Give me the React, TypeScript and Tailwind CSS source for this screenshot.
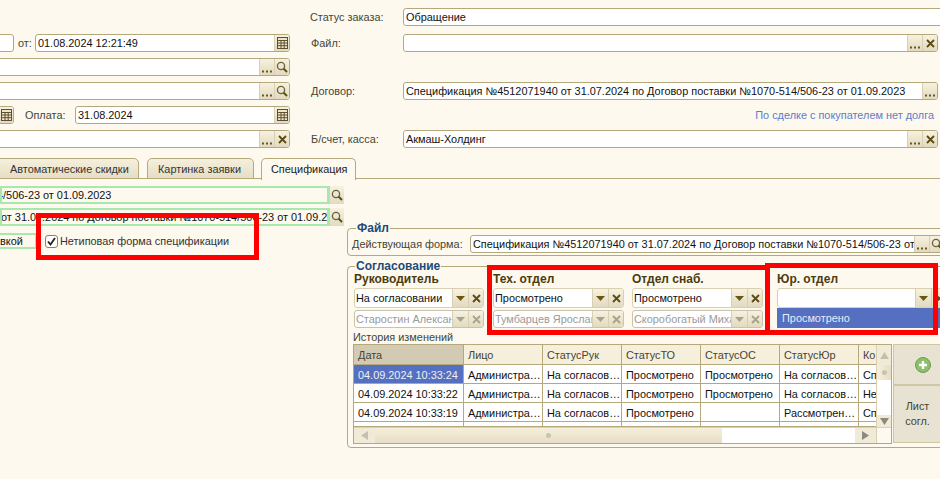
import type { ReactNode } from 'react';

const spec = 'Спецификация №4512071940 от 31.07.2024 по Договор поставки №1070-514/506-23 от 01.09.2023';

const Dots = () => (
  <svg className="self-end mb-[2px]" width="10" height="3" viewBox="0 0 10 3">
    <rect x="0" y="0.5" width="2" height="2" fill="#6b5a20" />
    <rect x="4" y="0.5" width="2" height="2" fill="#6b5a20" />
    <rect x="8" y="0.5" width="2" height="2" fill="#6b5a20" />
  </svg>
);

const Search = () => (
  <svg width="12" height="12" viewBox="0 0 12 12" fill="none">
    <circle cx="5" cy="5" r="3.6" stroke="#6b6040" strokeWidth="1.3" />
    <path d="M7.6 7.6 11 11" stroke="#5c4a10" strokeWidth="2" />
  </svg>
);

const Cross = ({ muted }: { muted?: boolean }) => (
  <svg width="9" height="9" viewBox="0 0 9 9" fill="none">
    <path d="M1 1 8 8M8 1 1 8" stroke={muted ? '#a8a290' : '#5c4a10'} strokeWidth="1.8" />
  </svg>
);

const Calendar = () => (
  <svg width="11" height="12" viewBox="0 0 11 12" fill="none">
    <rect x="0.5" y="0.5" width="10" height="11" fill="#efe6c8" stroke="#5c5030" />
    <path d="M0.5 3.5h10M0.5 6h10M0.5 8.7h10M4 3.5v8M7.2 3.5v8" stroke="#5c5030" />
  </svg>
);

const Arrow = ({ muted }: { muted?: boolean }) => (
  <svg width="9" height="5" viewBox="0 0 9 5">
    <path d="M0 0h9L4.5 5z" fill={muted ? '#a8a290' : '#6b5610'} />
  </svg>
);

const Btn = ({ children, w = 'w-[15px]' }: { children: ReactNode; w?: string }) => (
  <div className={`${w} h-full shrink-0 flex items-center justify-center border-l border-[#d8d0b0] bg-gradient-to-b from-[#f7f1df] to-[#e2dac0]`}>
    {children}
  </div>
);

function Field({ text, className = '', children, muted }: { text?: string; className?: string; children?: ReactNode; muted?: boolean }) {
  return (
    <div className={`h-[18px] flex border border-[#b5a97c] rounded-[3px] bg-white overflow-hidden ${className}`}>
      <div className={`flex-1 min-w-0 pl-[2px] leading-[16px] whitespace-nowrap overflow-hidden ${muted ? 'text-[#9a9a9a]' : 'text-[#111]'}`}>{text}</div>
      {children}
    </div>
  );
}

function Combo({ text, disabled, w }: { text?: string; disabled?: boolean; w: string }) {
  return (
    <div className={`${w} ${disabled ? 'h-[18px] border-[#c9c3ab]' : 'h-[20px] border-[#d8d0b0]'} flex border rounded-[3px] bg-white overflow-hidden`}>
      <div className={`flex-1 min-w-0 pl-[1px] whitespace-nowrap overflow-hidden ${disabled ? 'text-[#9a9a9a] leading-[16px]' : 'text-[#111] leading-[18px]'}`}>{text}</div>
      <Btn w="w-[16px]"><Arrow muted={disabled} /></Btn>
      <Btn><Cross muted={disabled} /></Btn>
    </div>
  );
}

const Label = ({ children, className = '' }: { children: ReactNode; className?: string }) => (
  <div className={`text-[#454535] leading-[18px] whitespace-nowrap ${className}`}>{children}</div>
);

function Tab({ children, active, className = '' }: { children: ReactNode; active?: boolean; className?: string }) {
  return (
    <div className={`h-[21px] border border-[#b5a97c] rounded-t-[5px] leading-[21px] whitespace-nowrap ${active ? 'bg-[#fdf9ee] border-b-0 text-[#222] h-[22px] -mb-px z-10' : 'bg-gradient-to-b from-[#f5efdc] to-[#e6dec4] text-[#333]'} ${className}`}>
      {children}
    </div>
  );
}

function Group({ title, className = '', titleClass = '', children }: { title: string; className?: string; titleClass?: string; children: ReactNode }) {
  return (
    <div className={`relative border border-[#b5a97c] rounded-[4px] ${className}`}>
      <div className={`absolute -top-[8px] bg-[#fdf9ee] px-[1px] font-bold leading-[14px] text-[#1d4a78] text-[12px] ${titleClass}`}>{title}</div>
      {children}
    </div>
  );
}

const columns = [
  { name: 'Дата', w: 'w-[110px]' },
  { name: 'Лицо', w: 'w-[79px]' },
  { name: 'СтатусРук', w: 'w-[79px]' },
  { name: 'СтатусТО', w: 'w-[79px]' },
  { name: 'СтатусОС', w: 'w-[79px]' },
  { name: 'СтатусЮр', w: 'w-[79px]' },
  { name: 'Ко', w: 'w-[30px]' },
];

const rows = [
  ['04.09.2024 10:33:24', 'Администра…', 'На согласов…', 'Просмотрено', 'Просмотрено', 'На согласов…', 'Сп'],
  ['04.09.2024 10:33:22', 'Администра…', 'На согласов…', 'Просмотрено', 'Просмотрено', 'На согласов…', 'Не'],
  ['04.09.2024 10:33:19', 'Администра…', 'На согласов…', 'Просмотрено', '', 'Рассмотрен…', 'Сп'],
  ['', '', '', '', '', '', ''],
];

function History() {
  return (
    <div className="w-[522px] overflow-hidden">
      <div className="flex h-[20px] bg-[#f5efdc]">
        {columns.map((c, i) => (
          <div key={c.name} className={`${c.w} shrink-0 border-r border-b border-[#b5a97c] pl-[4px] leading-[21px] text-[#454535] overflow-hidden ${i === 0 ? 'bg-[#d2cab2] text-[#222]' : ''}`}>{c.name}</div>
        ))}
      </div>
      {rows.map((row, r) => (
        <div key={r} className={`flex bg-white ${r === 3 ? 'h-[5px]' : 'h-[19px]'}`}>
          {row.map((cell, i) => (
            <div key={i} className={`${columns[i].w} shrink-0 border-r border-b border-[#b5a97c] pl-[4px] leading-[21px] whitespace-nowrap overflow-hidden ${r === 0 && i === 0 ? 'bg-[#5570c0] text-[#f0f0f0]' : 'text-[#111]'}`}>{cell}</div>
          ))}
        </div>
      ))}
    </div>
  );
}

function VScroll() {
  return (
    <div className="w-[15px] h-[82px] flex flex-col bg-white border-l border-[#d8d0b0]">
      <div className="h-[20px] flex items-center justify-center bg-[#f0ead6]">
        <svg width="9" height="7" viewBox="0 0 9 7"><path d="M4.5 0 9 7H0z" fill="#c4c0b0" /></svg>
      </div>
      <div className="h-[15px] flex items-center justify-center bg-gradient-to-r from-[#f5efdc] to-[#e6dec4]">
        <div className="w-[5px] h-[5px] rounded-full bg-[#c8c4b4]" />
      </div>
      <div className="flex-1" />
      <div className="h-[12px] flex items-center justify-center bg-[#f0ead6]">
        <svg width="9" height="7" viewBox="0 0 9 7"><path d="M0 0h9L4.5 7z" fill="#8c8a80" /></svg>
      </div>
    </div>
  );
}

function HScroll() {
  return (
    <div className="h-[16px] flex border-t border-[#d8d0b0] bg-white">
      <div className="w-[21px] flex items-center justify-center bg-[#f0ead6]">
        <svg width="7" height="9" viewBox="0 0 7 9"><path d="M0 4.5 7 0v9z" fill="#c4c0b0" /></svg>
      </div>
      <div className="w-[347px] flex items-center justify-center bg-gradient-to-b from-[#f5efdc] to-[#e6dec4]">
        <div className="w-[5px] h-[5px] rounded-full bg-[#c8c4b4]" />
      </div>
      <div className="flex-1" />
      <div className="w-[21px] flex items-center justify-center bg-[#f0ead6]">
        <svg width="7" height="9" viewBox="0 0 7 9"><path d="M7 4.5 0 0v9z" fill="#8c8a80" /></svg>
      </div>
      <div className="w-[15px] border-l border-[#d8d0b0] bg-[#fdf9ee]" />
    </div>
  );
}

export default function App() {
  return (
    <div className="relative w-[940px] h-[479px] overflow-hidden bg-[#fdf9ee] text-[10.9px] text-[#222]" style={{ fontFamily: '"Liberation Sans", Arial, sans-serif' }}>
      <div className="flex h-[158px]">
        {/* левая колонка реквизитов */}
        <div className="w-[290px] shrink-0 pt-[34px] flex flex-col gap-[6px]">
          <div className="flex items-center">
            <Field className="w-[24px] -ml-[10px]" />
            <span className="ml-[4px] w-[17px] text-[#454535]">от:</span>
            <Field className="flex-1" text="01.08.2024 12:21:49"><Btn><Calendar /></Btn></Field>
          </div>
          <Field className="-ml-[10px]"><Btn><Dots /></Btn><Btn><Search /></Btn></Field>
          <Field className="-ml-[10px]"><Btn><Dots /></Btn><Btn><Search /></Btn></Field>
          <div className="flex items-center">
            <Field className="w-[24px] -ml-[10px]"><Btn><Calendar /></Btn></Field>
            <span className="ml-[11px] w-[50px] text-[#454535]">Оплата:</span>
            <Field className="flex-1" text="31.08.2024"><Btn><Calendar /></Btn></Field>
          </div>
          <Field className="-ml-[10px]"><Btn><Dots /></Btn><Btn><Cross /></Btn></Field>
        </div>

        {/* правая колонка реквизитов */}
        <div className="ml-[20px] w-[650px] pt-[8px] flex flex-col">
          <div className="flex items-center">
            <Label className="w-[93px]">Статус заказа:</Label>
            <Field className="flex-1 -mr-[10px]" text="Обращение" />
          </div>
          <div className="flex items-center mt-[8px]">
            <Label className="w-[93px] pl-[1px]">Файл:</Label>
            <Field className="w-[535px]"><Btn><Dots /></Btn><Btn><Cross /></Btn></Field>
          </div>
          <div className="flex items-center mt-[30px]">
            <Label className="w-[93px] pl-[1px]">Договор:</Label>
            <Field className="w-[535px]" text={spec}><Btn><Dots /></Btn></Field>
          </div>
          <div className="h-[30px] pl-[93px] w-[624px] text-right leading-[31px] text-[#5f7bcb]">По сделке с покупателем нет долга</div>
          <div className="flex items-center">
            <Label className="w-[93px] pl-[1px]">Б/счет, касса:</Label>
            <Field className="w-[535px]" text="Акмаш-Холдинг"><Btn><Dots /></Btn><Btn><Cross /></Btn></Field>
          </div>
        </div>
      </div>

      {/* вкладки */}
      <div className="flex border-b border-[#b5a97c] h-[21px]">
        <Tab className="w-[149px] -ml-[10px] pl-[19px]">Автоматические скидки</Tab>
        <Tab className="w-[107px] ml-[8px] pl-[10px]">Картинка заявки</Tab>
        <Tab active className="w-[95px] ml-[7px] pl-[9px]">Спецификация</Tab>
      </div>

      <div className="flex">
        {/* левая часть вкладки */}
        <div className="w-[344px] shrink-0 pt-[7px] flex flex-col gap-[4px]">
          <div className="flex h-[18px]">
            <div className="w-[329px] border-2 border-[#a8e8ac] pl-0 leading-[14px] whitespace-nowrap overflow-hidden text-[#111]">
              <span className="inline-block -ml-[5px]">4/506-23 от 01.09.2023</span>
            </div>
            <Btn><Search /></Btn>
          </div>
          <div className="flex h-[18px]">
            <div className="w-[329px] border-2 border-[#a8e8ac] leading-[14px] whitespace-nowrap overflow-hidden text-[#111]">
              <span className="-ml-[1px]">от 31.07.2024 по Договор поставки №1070-514/506-23 от 01.09.2023</span>
            </div>
            <Btn><Search /></Btn>
          </div>
          <div className="flex items-center h-[18px] mt-[2px]">
            <div className="w-[37px] h-[16px] border-y-2 border-r-2 border-[#a8e8ac] leading-[12px] overflow-hidden text-[#111]">вкой</div>
            <div className="ml-[8px] w-[13px] h-[13px] border border-[#8a8268] rounded-[3px] bg-white flex items-center justify-center">
              <svg width="9" height="9" viewBox="0 0 9 9" fill="none"><path d="M1 4.5 3.5 7.5 8 1" stroke="#222" strokeWidth="1.8" /></svg>
            </div>
            <span className="ml-[2px] text-[#333] whitespace-nowrap">Нетиповая форма спецификации</span>
          </div>
        </div>

        {/* согласование */}
        <div className="ml-[3px] pt-[49px] w-[620px] shrink-0">
          <Group title="Файл" className="h-[28px] pt-[6px] pl-[4px]" titleClass="left-[8px]">
            <div className="flex items-center">
              <Label className="w-[118px]">Действующая форма:</Label>
              <Field className="w-[475px]" text={spec}><Btn><Dots /></Btn><Btn><Search /></Btn></Field>
            </div>
          </Group>
          <Group title="Согласование" className="mt-[10px] h-[182px] pt-[4px] pl-[6px]" titleClass="left-[7px]">
            <div className="flex">
              <div className="w-[139px]">
                <div className="font-bold text-[#4a3c10] text-[12px] leading-[17px]">Руководитель</div>
                <Combo w="w-[130px]" text="На согласовании" />
                <div className="mt-[2px]"><Combo w="w-[130px]" disabled text="Старостин Александр" /></div>
              </div>
              <div className="w-[139px]">
                <div className="font-bold text-[#4a3c10] text-[12px] leading-[17px]">Тех. отдел</div>
                <Combo w="w-[131px]" text="Просмотрено" />
                <div className="mt-[2px]"><Combo w="w-[131px]" disabled text="Тумбарцев Ярослав" /></div>
              </div>
              <div className="w-[145px]">
                <div className="font-bold text-[#4a3c10] text-[12px] leading-[17px]">Отдел снаб.</div>
                <Combo w="w-[131px]" text="Просмотрено" />
                <div className="mt-[2px]"><Combo w="w-[131px]" disabled text="Скоробогатый Михаил" /></div>
              </div>
              <div className="w-[170px]">
                <div className="font-bold text-[#4a3c10] text-[12px] leading-[17px]">Юр. отдел</div>
                <Combo w="w-[170px]" />
                <div className="bg-[#5570c0] text-[#e8ecf8] h-[20px] leading-[20px] pl-[5px]">Просмотрено</div>
              </div>
            </div>
            <div className="leading-[15px] text-[#454535] pt-[2px] h-[15px] -ml-[1px]">История изменений</div>
            <div className="flex -ml-[1px] mt-[1px]">
              <div className="w-[539px] h-[100px] border border-[#b5a97c] overflow-hidden">
                <div className="flex">
                  <History />
                  <VScroll />
                </div>
                <HScroll />
              </div>
              <div className="w-[60px] ml-[1px] flex flex-col">
                <div className="h-[41px] flex items-center justify-center bg-[#e8e2d2] border border-[#cfc6a2]">
                  <svg width="16" height="16" viewBox="0 0 16 16">
                    <circle cx="8" cy="8" r="7.5" fill="#8cc06a" stroke="#6d9a52" />
                    <path d="M8 4v8M4 8h8" stroke="#fff" strokeWidth="2.4" />
                  </svg>
                </div>
                <div className="h-[58px] pr-[11px] flex items-center justify-center text-center leading-[15px] text-[#454535] bg-[#e8e2d2] border border-[#cfc6a2]">Лист<br />согл.</div>
              </div>
            </div>
          </Group>
        </div>
      </div>

      {/* красные пометки поверх скриншота */}
      <div className="absolute left-[36px] top-[213px] w-[223px] h-[47px] border-[5px] border-[#ff0000]" />
      <div className="absolute left-[487px] top-[265px] w-[283px] h-[70px] border-[5px] border-[#ff0000]" />
      <div className="absolute left-[765px] top-[263px] w-[173px] h-[72px] border-[5px] border-[#ff0000]" />
    </div>
  );
}
